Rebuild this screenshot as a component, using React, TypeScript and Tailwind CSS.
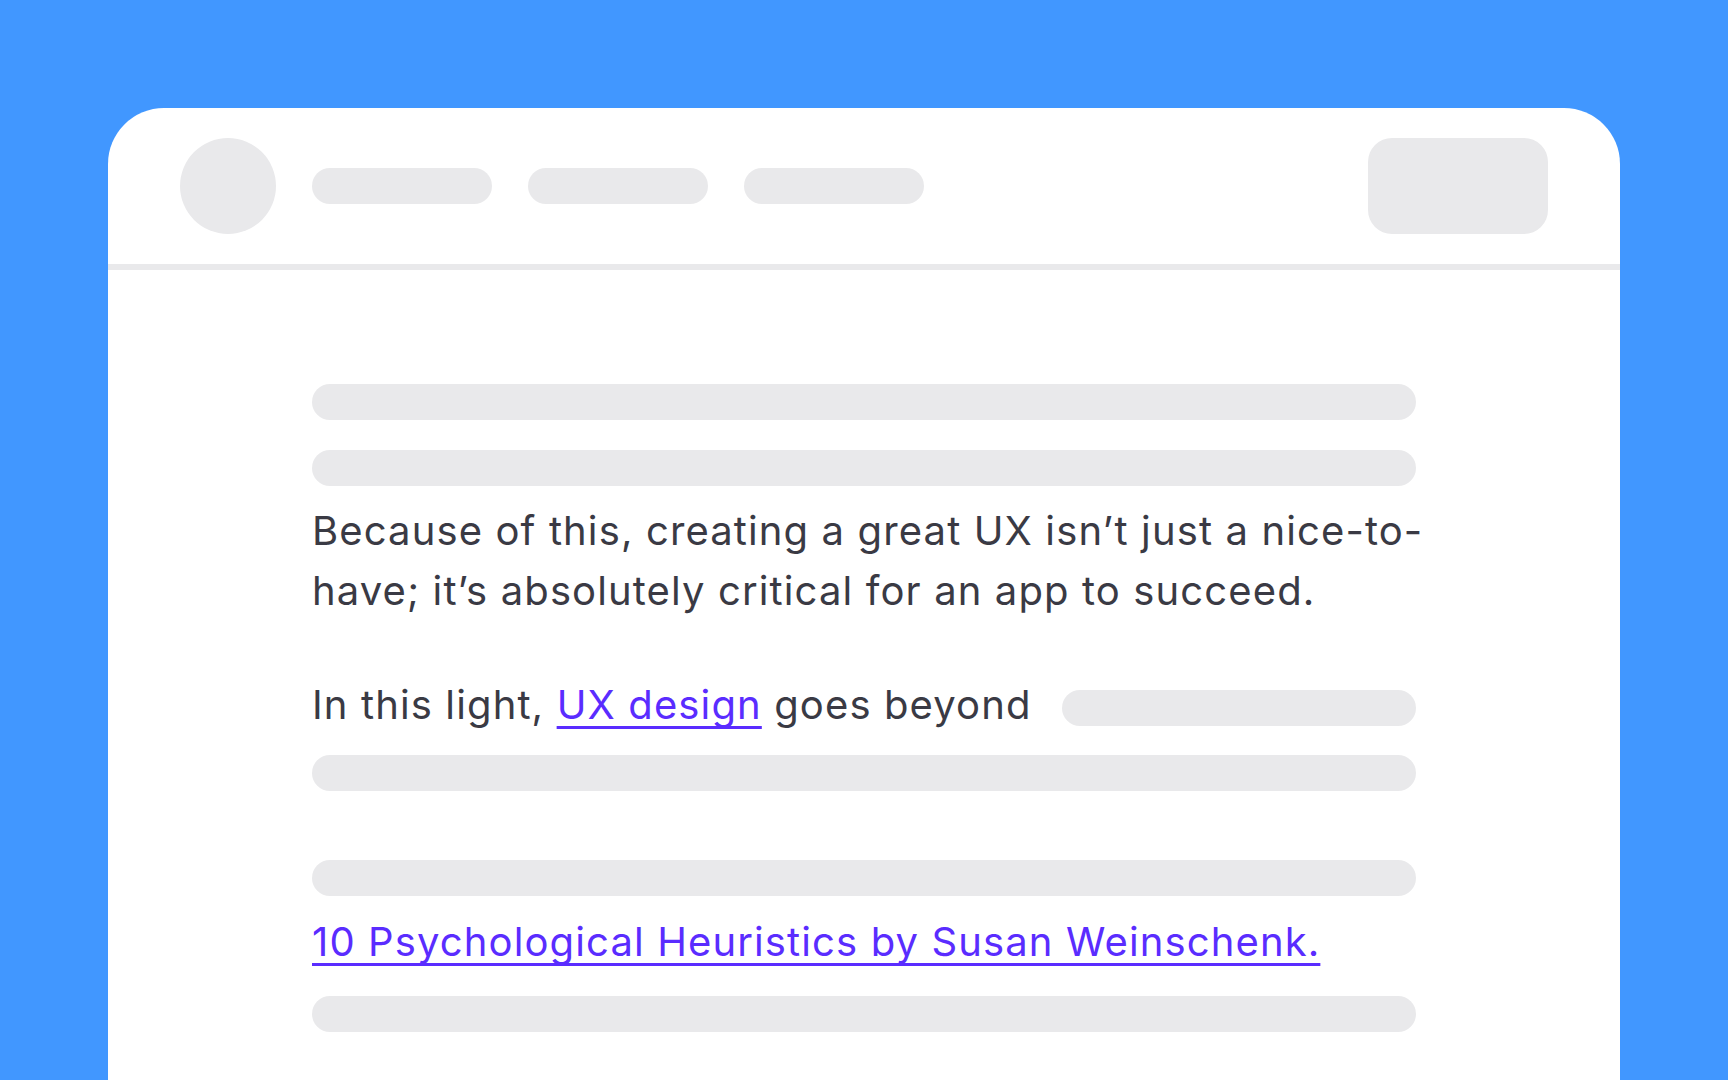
import React from "react";

function Bar({ className = "" }: { className?: string }) {
  return <div className={`h-[36px] rounded-full bg-[#e9e9eb] ${className}`} />;
}

export default function App() {
  return (
    <div className="h-screen w-full overflow-hidden bg-[#4197ff] px-[108px] pt-[108px] font-['Inter',sans-serif]">
      <div className="h-full rounded-t-[56px] bg-white">
        <header className="flex h-[162px] items-center border-b-[6px] border-[#e9e9eb] px-[72px]">
          <div className="flex w-full items-center">
            <div className="h-[96px] w-[96px] rounded-full bg-[#e9e9eb]" />
            <nav className="ml-[36px] flex gap-[36px]">
              <Bar className="w-[180px]" />
              <Bar className="w-[180px]" />
              <Bar className="w-[180px]" />
            </nav>
            <div className="ml-auto h-[96px] w-[180px] rounded-[24px] bg-[#e9e9eb]" />
          </div>
        </header>

        <article className="mx-auto w-[1104px] pt-[114px] text-[40px] leading-[60px] tracking-[0.028em] text-[#3a3a44]">
          <Bar />
          <Bar className="mt-[30px]" />
          <p className="-mr-[20px] mt-[15px]">
            Because of this, creating a great UX isn’t just a nice-to-have; it’s absolutely critical for an app to
            succeed.
          </p>
          <div className="mt-[54px] flex items-start">
            <p className="whitespace-nowrap">
              In this light,{" "}
              <a
                href="#"
                className="text-[#5a2cff] underline decoration-[3px] underline-offset-[7px] [text-decoration-skip-ink:none]"
              >
                UX design
              </a>{" "}
              goes beyond
            </p>
            <Bar className="ml-auto mt-[15px] w-[354px]" />
          </div>
          <Bar className="mt-[20px]" />
          <Bar className="mt-[69px]" />
          <p className="mt-[16px]">
            <a
              href="#"
              className="text-[#5a2cff] underline decoration-[3px] underline-offset-[7px] [text-decoration-skip-ink:none]"
            >
              10 Psychological Heuristics by Susan Weinschenk.
            </a>
          </p>
          <Bar className="mt-[24px]" />
        </article>
      </div>
    </div>
  );
}
